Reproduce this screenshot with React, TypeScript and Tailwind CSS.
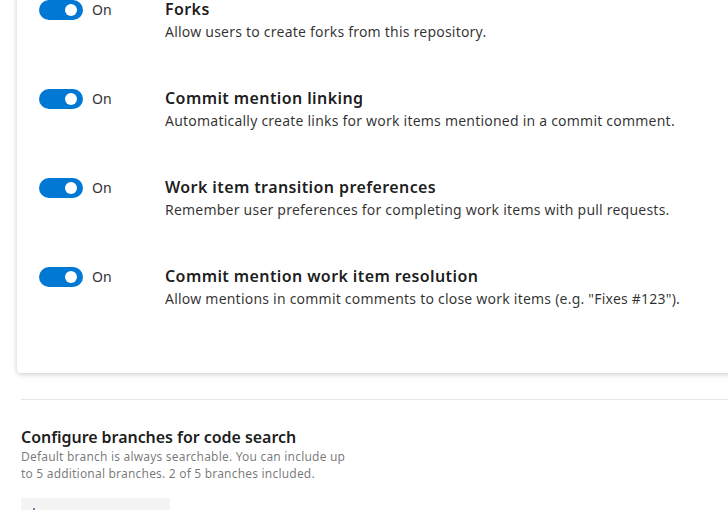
import React from "react";

const rows = [
  { title: "Forks", desc: "Allow users to create forks from this repository." },
  { title: "Commit mention linking", desc: "Automatically create links for work items mentioned in a commit comment." },
  { title: "Work item transition preferences", desc: "Remember user preferences for completing work items with pull requests." },
  { title: "Commit mention work item resolution", desc: 'Allow mentions in commit comments to close work items (e.g. "Fixes #123").' },
];

function Toggle() {
  return (
    <div className="flex items-center w-[126px] shrink-0">
      <div className="w-[44px] h-[20px] rounded-full bg-[#0078d4] flex items-center justify-end pr-[6px]">
        <div className="w-[12px] h-[12px] rounded-full bg-white" />
      </div>
      <span className="ml-[9px] text-[14px] leading-[20px] text-[#333333]">On</span>
    </div>
  );
}

export default function App() {
  return (
    <div
      className="w-[728px] h-[510px] overflow-hidden bg-white"
      style={{ fontFamily: '"Noto Sans", "Open Sans", sans-serif' }}
    >
      <div className="-mt-[19px] ml-[17px] w-[760px] bg-white rounded-[4px] shadow-[0_1px_4px_rgba(0,0,0,0.16),0_2px_8px_rgba(0,0,0,0.06)] pl-[22px] pt-[17px] pb-[64px] flex flex-col gap-[45px]">
        {rows.map((r) => (
          <div key={r.title} className="flex items-start">
            <div className="pt-[2px]">
              <Toggle />
            </div>
            <div className="flex flex-col">
              <div className="text-[16px] leading-[22px] font-semibold tracking-[0.4px] text-[#000000e6]">{r.title}</div>
              <div className="mt-[2px] text-[14px] leading-[20px] tracking-[0.22px] text-[#000000d0]">{r.desc}</div>
            </div>
          </div>
        ))}
      </div>
      <div className="ml-[21px] mt-[26px] border-t border-[#e6e6e6] pt-[26px]">
        <div className="text-[16px] leading-[22px] font-semibold tracking-[-0.05px] text-[#000000e6]">Configure branches for code search</div>
        <div className="text-[12px] leading-[17px] tracking-[0.2px] text-[#0000008c] whitespace-nowrap">
          Default branch is always searchable. You can include up
          <br />
          to 5 additional branches. 2 of 5 branches included.
        </div>
        <div className="mt-[16px] w-[149px] h-[32px] bg-[#f4f4f4] flex items-start pl-[7px] pt-[10px]">
          <svg width="12" height="12" viewBox="0 0 12 12" aria-hidden="true">
            <path d="M6 0v12M0 6h12" stroke="#2b2b6b" strokeWidth="1.2" fill="none" />
          </svg>
        </div>
      </div>
    </div>
  );
}
